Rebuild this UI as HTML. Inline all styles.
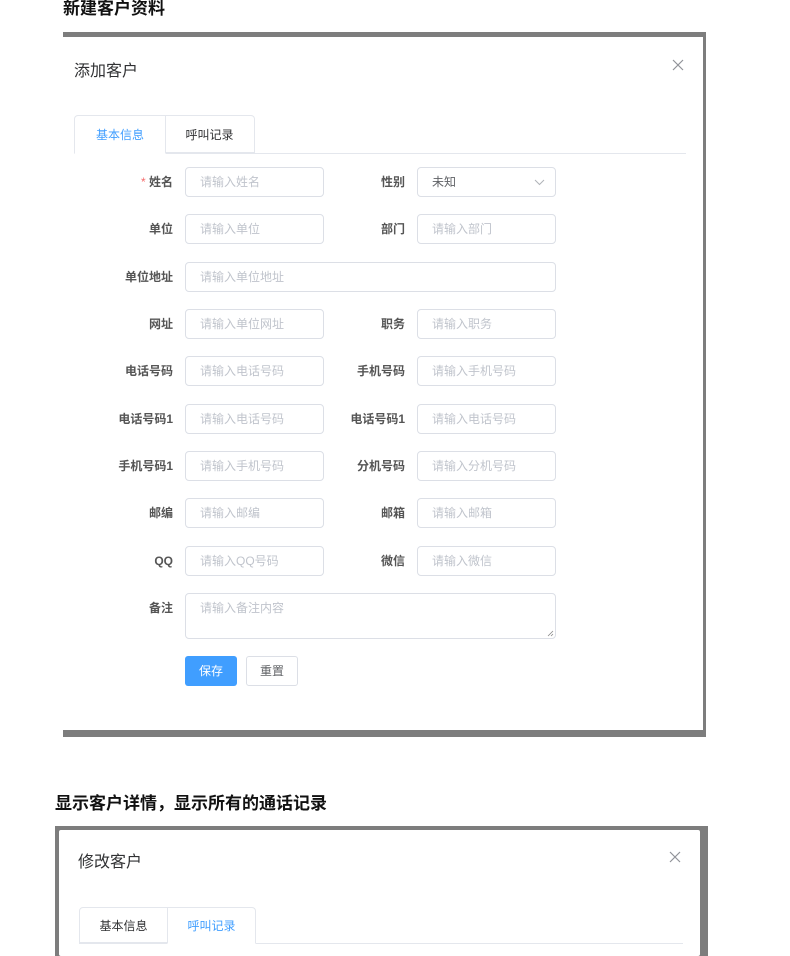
<!DOCTYPE html>
<html><head><meta charset="utf-8"><style>
body{margin:0;width:790px;height:956px;background:#fff;position:relative;overflow:hidden;font-family:"Liberation Sans","Noto Sans CJK SC",sans-serif;}
.a{position:absolute;}
.h{font-weight:bold;font-size:17px;color:#111;white-space:nowrap;}
.lb{position:absolute;font-size:12px;font-weight:bold;color:#555;text-align:right;width:90px;line-height:30px;white-space:nowrap;}
.in{position:absolute;height:28px;border:1px solid #dcdfe6;border-radius:4px;background:#fff;font-size:12px;color:#c0c4cc;line-height:28px;padding-left:14px;box-sizing:content-box;white-space:nowrap;}
.tab{position:absolute;font-size:12px;text-align:center;box-sizing:border-box;border:1px solid #e4e7ed;}
.x{position:absolute;width:12px;height:12px;}
</style></head><body>
<div class="a h" style="left:63px;top:-6px;">新建客户资料</div>
<div class="a" style="left:63px;top:32px;width:643px;height:705px;background:#7d7d7d;"></div>
<div class="a" style="left:63px;top:37px;width:640px;height:693px;background:#fff;"></div>
<div class="a" style="left:74px;top:57px;font-size:16px;color:#303133;">添加客户</div>
<svg class="x" style="left:672px;top:59px;" viewBox="0 0 12 12"><path d="M1 1L11 11M11 1L1 11" stroke="#909399" stroke-width="1.2"/></svg>
<div class="a" style="left:74px;top:153px;width:612px;height:1px;background:#e4e7ed;"></div>
<div class="tab" style="left:74px;top:115px;width:92px;height:39px;line-height:38px;color:#409eff;border-bottom-color:#fff;border-radius:4px 0 0 0;">基本信息</div>
<div class="tab" style="left:165px;top:115px;width:90px;height:38px;line-height:38px;color:#303133;border-left:none;border-radius:0 4px 0 0;">呼叫记录</div>

<div class="lb" style="left:83px;top:167px;"><span style="color:#f56c6c;font-weight:normal">*</span> 姓名</div>
<div class="in" style="left:185px;top:167px;width:123px;">请输入姓名</div>
<div class="lb" style="left:315px;top:167px;">性别</div>
<div class="in" style="left:417px;top:167px;width:123px;color:#606266;">未知<svg style="position:absolute;right:10px;top:11px;" width="11" height="7" viewBox="0 0 11 7"><path d="M1 1L5.5 5.5L10 1" fill="none" stroke="#b0b3b8" stroke-width="1"/></svg></div>

<div class="lb" style="left:83px;top:214px;">单位</div>
<div class="in" style="left:185px;top:214px;width:123px;">请输入单位</div>
<div class="lb" style="left:315px;top:214px;">部门</div>
<div class="in" style="left:417px;top:214px;width:123px;">请输入部门</div>

<div class="lb" style="left:83px;top:262px;">单位地址</div>
<div class="in" style="left:185px;top:262px;width:355px;">请输入单位地址</div>

<div class="lb" style="left:83px;top:309px;">网址</div>
<div class="in" style="left:185px;top:309px;width:123px;">请输入单位网址</div>
<div class="lb" style="left:315px;top:309px;">职务</div>
<div class="in" style="left:417px;top:309px;width:123px;">请输入职务</div>

<div class="lb" style="left:83px;top:356px;">电话号码</div>
<div class="in" style="left:185px;top:356px;width:123px;">请输入电话号码</div>
<div class="lb" style="left:315px;top:356px;">手机号码</div>
<div class="in" style="left:417px;top:356px;width:123px;">请输入手机号码</div>

<div class="lb" style="left:83px;top:404px;">电话号码1</div>
<div class="in" style="left:185px;top:404px;width:123px;">请输入电话号码</div>
<div class="lb" style="left:315px;top:404px;">电话号码1</div>
<div class="in" style="left:417px;top:404px;width:123px;">请输入电话号码</div>

<div class="lb" style="left:83px;top:451px;">手机号码1</div>
<div class="in" style="left:185px;top:451px;width:123px;">请输入手机号码</div>
<div class="lb" style="left:315px;top:451px;">分机号码</div>
<div class="in" style="left:417px;top:451px;width:123px;">请输入分机号码</div>

<div class="lb" style="left:83px;top:498px;">邮编</div>
<div class="in" style="left:185px;top:498px;width:123px;">请输入邮编</div>
<div class="lb" style="left:315px;top:498px;">邮箱</div>
<div class="in" style="left:417px;top:498px;width:123px;">请输入邮箱</div>

<div class="lb" style="left:83px;top:546px;">QQ</div>
<div class="in" style="left:185px;top:546px;width:123px;">请输入QQ号码</div>
<div class="lb" style="left:315px;top:546px;">微信</div>
<div class="in" style="left:417px;top:546px;width:123px;">请输入微信</div>

<div class="lb" style="left:83px;top:593px;">备注</div>
<div class="in" style="left:185px;top:593px;width:355px;height:44px;">请输入备注内容<svg style="position:absolute;right:1px;bottom:1px;" width="7" height="7" viewBox="0 0 7 7"><path d="M6 1L1 6M6 4L4 6" stroke="#888" stroke-width="0.8"/></svg></div>

<div class="a" style="left:185px;top:656px;width:52px;height:30px;background:#409eff;border-radius:3px;color:#fff;font-size:12px;text-align:center;line-height:30px;">保存</div>
<div class="a" style="left:246px;top:656px;width:50px;height:28px;border:1px solid #dcdfe6;border-radius:3px;color:#606266;font-size:12px;text-align:center;line-height:28px;">重置</div>

<div class="a h" style="left:55px;top:789px;">显示客户详情，显示所有的通话记录</div>
<div class="a" style="left:55px;top:826px;width:653px;height:130px;background:#7d7d7d;"></div>
<div class="a" style="left:59px;top:830px;width:641px;height:126px;background:#fff;border-radius:2px;"></div>
<div class="a" style="left:78px;top:848px;font-size:16px;color:#303133;">修改客户</div>
<svg class="x" style="left:669px;top:851px;" viewBox="0 0 12 12"><path d="M1 1L11 11M11 1L1 11" stroke="#909399" stroke-width="1.2"/></svg>
<div class="a" style="left:79px;top:943px;width:604px;height:1px;background:#e4e7ed;"></div>
<div class="tab" style="left:79px;top:907px;width:89px;height:36px;line-height:36px;color:#303133;border-radius:4px 0 0 0;">基本信息</div>
<div class="tab" style="left:167px;top:907px;width:89px;height:37px;line-height:36px;color:#409eff;border-bottom-color:#fff;border-radius:0 4px 0 0;">呼叫记录</div>
</body></html>
